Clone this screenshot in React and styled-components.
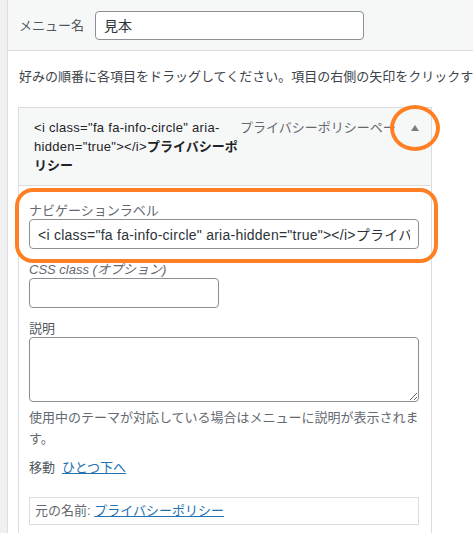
import React from 'react';
import styled, { createGlobalStyle, css } from 'styled-components';

const Global = createGlobalStyle`
  html, body { margin: 0; padding: 0; background: #fff; }
  body {
    font-family: "Liberation Sans", "Noto Sans CJK JP", sans-serif;
    font-size: 13px;
    color: #3c434a;
    overflow: hidden;
  }
  * { box-sizing: border-box; }
`;

const ORANGE = '#ff8024';

const Page = styled.div`
  display: flex;
  width: 473px;
  height: 533px;
  overflow: hidden;
`;

const Rail = styled.div`
  flex: 0 0 8px;
  background: #f0f0f1;
  border-right: 1px solid #dcdcde;
`;

const Main = styled.div`
  flex: 1;
  min-width: 0;
  display: flex;
  flex-direction: column;
`;

const NameBar = styled.div`
  flex: 0 0 51px;
  height: 51px;
  background: #f6f7f7;
  border-bottom: 1px solid #dcdcde;
  display: flex;
  align-items: center;
  gap: 11px;
  padding-left: 11px;
`;

const NameLabel = styled.label`
  font-size: 13px;
  line-height: 19px;
  color: #50575e;
`;

const baseInput = css`
  border: 1px solid #8c8f94;
  border-radius: 4px;
  background: #fff;
  padding: 0 8px;
  font-family: "Liberation Sans", "Noto Sans CJK JP", sans-serif;
  font-size: 14px;
  color: #2c3338;
  outline: none;
  margin: 0;
`;

const NameInput = styled.input`
  ${baseInput}
  width: 269px;
  height: 29px;
`;

const Content = styled.div`
  padding: 16px 0 0 10px;
`;

const Intro = styled.p`
  margin: 0 0 21px;
  white-space: nowrap;
  line-height: 19px;
  color: #3c434a;
  padding-left: 1px;
`;

const Item = styled.div`
  width: 414px;
`;

const ItemHead = styled.div`
  display: grid;
  border: 1px solid #dcdcde;
  background: #f6f7f7;
  padding: 10px 10px 10px 15px;
  line-height: 19px;
`;

const Title = styled.span`
  grid-area: 1 / 1;
  width: 208px;
  color: #1d2327;
`;

const TitleCode = styled.span`
  letter-spacing: 0.3px;
`;

const TitleName = styled.span`
  font-weight: 700;
`;

const Controls = styled.span`
  grid-area: 1 / 1;
  justify-self: end;
  align-self: start;
  display: flex;
  align-items: center;
  height: 19px;
`;

const ItemType = styled.span`
  width: 156px;
  overflow: hidden;
  white-space: nowrap;
  color: #646970;
`;

const ArrowWrap = styled.span`
  position: relative;
  width: 25px;
  height: 19px;
  display: flex;
  align-items: center;
  justify-content: flex-end;
  padding-right: 2px;
`;

const Arrow = styled.span`
  width: 0;
  height: 0;
  border-left: 4px solid transparent;
  border-right: 4px solid transparent;
  border-bottom: 6px solid #787c82;
`;

const Circle = styled.span`
  position: absolute;
  left: -6px;
  top: -13px;
  width: 50px;
  height: 46px;
  border: 4px solid ${ORANGE};
  border-radius: 50%;
  pointer-events: none;
`;

const Settings = styled.div`
  border: 1px solid #dcdcde;
  border-top: 0;
  padding: 16px 10px 10px;
`;

const Field = styled.div`
  position: relative;
  margin-bottom: 12px;
  ${(p) =>
    p.$highlight &&
    css`
      &::after {
        content: '';
        position: absolute;
        left: -14px;
        right: -17px;
        top: -14px;
        bottom: -14px;
        border: 4px solid ${ORANGE};
        border-radius: 18px;
        pointer-events: none;
      }
    `}
`;

const FieldLabel = styled.label`
  display: block;
  line-height: 17px;
  color: ${(p) => p.$tone || '#646970'};
  font-style: ${(p) => (p.$italic ? 'italic' : 'normal')};
`;

const TextInput = styled.input`
  ${baseInput}
  display: block;
  width: ${(p) => p.$width || 390}px;
  height: 30px;
  letter-spacing: 0.25px;
`;

const TextArea = styled.textarea`
  ${baseInput}
  display: block;
  width: 390px;
  height: 65px;
  padding: 2px 6px;
  resize: both;
`;

const Description = styled.p`
  margin: -7px 0 0;
  line-height: 21px;
  color: #646970;
  width: 391px;
`;

const MoveRow = styled.div`
  margin-top: 9px;
  line-height: 19px;
  color: #50575e;
`;

const MoveLabel = styled.span`
  margin-right: 7px;
`;

const Link = styled.a`
  color: #2271b1;
  text-decoration: underline;
  cursor: pointer;
`;

const Original = styled.div`
  margin-top: 20px;
  width: 390px;
  border: 1px solid #dcdcde;
  padding: 4px 5px;
  line-height: 18px;
  color: #646970;
`;

export default function App() {
  const code = '<i class="fa fa-info-circle" aria-hidden="true"></i>';
  return (
    <>
      <Global />
      <Page>
        <Rail />
        <Main>
          <NameBar>
            <NameLabel>メニュー名</NameLabel>
            <NameInput defaultValue="見本" />
          </NameBar>
          <Content>
            <Intro>
              好みの順番に各項目をドラッグしてください。項目の右側の矢印をクリックすると、追加の設定オプションが表示されます。
            </Intro>
            <Item>
              <ItemHead>
                <Title>
                  <TitleCode>{code}</TitleCode>
                  <TitleName>プライバシーポリシー</TitleName>
                </Title>
                <Controls>
                  <ItemType>プライバシーポリシーページ</ItemType>
                  <ArrowWrap>
                    <Arrow />
                    <Circle />
                  </ArrowWrap>
                </Controls>
              </ItemHead>
              <Settings>
                <Field $highlight>
                  <FieldLabel>ナビゲーションラベル</FieldLabel>
                  <TextInput defaultValue={code + 'プライバシーポリシー'} />
                </Field>
                <Field>
                  <FieldLabel $italic>CSS class (オプション)</FieldLabel>
                  <TextInput $width={190} />
                </Field>
                <Field>
                  <FieldLabel $tone="#50575e">説明</FieldLabel>
                  <TextArea />
                </Field>
                <Description>
                  使用中のテーマが対応している場合はメニューに説明が表示されます。
                </Description>
                <MoveRow>
                  <MoveLabel>移動</MoveLabel>
                  <Link>ひとつ下へ</Link>
                </MoveRow>
                <Original>
                  元の名前: <Link>プライバシーポリシー</Link>
                </Original>
              </Settings>
            </Item>
          </Content>
        </Main>
      </Page>
    </>
  );
}
